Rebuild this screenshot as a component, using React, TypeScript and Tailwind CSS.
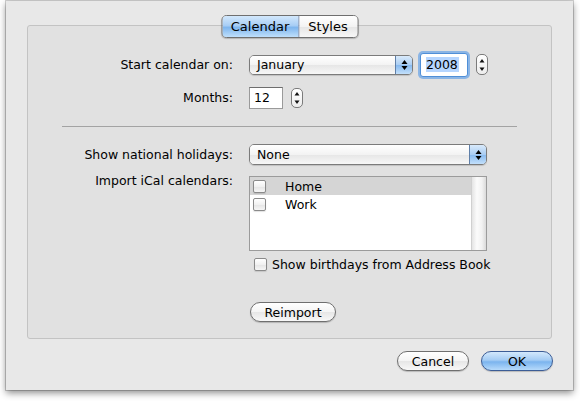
import React from "react";

const font = "font-['DejaVu_Sans',sans-serif]";

function Arrows({ color = "#000" }: { color?: string }) {
  return (
    <svg width="7" height="12" viewBox="0 0 7 12">
      <path d="M3.5 1 L6.5 5 L0.5 5 Z" fill={color} />
      <path d="M3.5 11 L6.5 7 L0.5 7 Z" fill={color} />
    </svg>
  );
}

function PopUp({ label, width, height }: { label: string; width: number; height: number }) {
  return (
    <div
      className="flex items-stretch rounded-[5px] border border-[#7b7b7b] overflow-hidden shadow-[0_1px_1px_rgba(0,0,0,0.15)]"
      style={{ width, height }}
    >
      <div className="flex-1 flex items-center pl-[7px] bg-[linear-gradient(#ffffff,#f3f3f3_50%,#e6e6e6_51%,#f7f7f7)] text-black">
        {label}
      </div>
      <div className="w-[17px] flex items-center justify-center border-l border-[#5f7fa8] bg-[linear-gradient(#d9eafb,#a9cdf3_50%,#86b9ef_51%,#c3e0fb)]">
        <Arrows />
      </div>
    </div>
  );
}

function Stepper({ h }: { h: number }) {
  return (
    <div
      className="w-[12px] flex flex-col items-center justify-center rounded-[5px] border border-[#7b7b7b] bg-[linear-gradient(#ffffff,#ededed)]"
      style={{ height: h }}
    >
      <svg width="6" height="14" viewBox="0 0 6 14">
        <path d="M3 1 L5.5 4.5 L0.5 4.5 Z" fill="#111" />
        <path d="M3 13 L5.5 9.5 L0.5 9.5 Z" fill="#111" />
      </svg>
    </div>
  );
}

function Check() {
  return (
    <div className="w-[13px] h-[13px] shrink-0 rounded-[2px] border border-[#8a8a8a] bg-[linear-gradient(#ffffff,#f1f1f1_50%,#e4e4e4_51%,#f6f6f6)] shadow-[0_1px_1px_rgba(0,0,0,0.12)]" />
  );
}

function Push({ label, w, blue = false }: { label: string; w: number; blue?: boolean }) {
  return (
    <button
      className={
        "h-[20px] rounded-full flex items-center justify-center text-black shadow-[0_1px_1px_rgba(0,0,0,0.2)] " +
        (blue
          ? "border border-[#3c5d96] bg-[linear-gradient(#d3e8fc,#a4ccf4_45%,#7bb4ee_55%,#b6dafb)]"
          : "border border-[#6f6f6f] bg-[linear-gradient(#ffffff,#f4f4f4_50%,#e6e6e6_51%,#f8f8f8)]")
      }
      style={{ width: w }}
    >
      {label}
    </button>
  );
}

export default function App() {
  return (
    <div className={`w-[580px] h-[401px] bg-white ${font} text-[12.5px] text-black leading-[15px]`}>
      <div className="ml-[6px] mt-[1px] w-[567px] h-[389px] bg-[#e8e8e8] shadow-[0_0_0_1px_rgba(0,0,0,0.18),0_3px_7px_rgba(0,0,0,0.45)] flex flex-col">
        {/* group box */}
        <div className="relative ml-[21px] mt-[24px] w-[525px] h-[314px] rounded-[3px] border border-[#c3c3c3] bg-[#e1e1e1] pt-[27px]">
          {/* tabs */}
          <div className="absolute top-[-11px] left-1/2 -translate-x-1/2 flex h-[23px] rounded-[5px] border border-[#6f6f6f] overflow-hidden shadow-[0_1px_1px_rgba(0,0,0,0.2)] text-[13px]">
            <div className="w-[77px] flex items-center justify-center border-r border-[#6f82a5] bg-[linear-gradient(#d3e8fc,#a8cef5_45%,#7fb6ee_55%,#bfdffb)]">
              Calendar
            </div>
            <div className="w-[58px] flex items-center justify-center bg-[linear-gradient(#ffffff,#f3f3f3_50%,#e5e5e5_51%,#f7f7f7)]">
              Styles
            </div>
          </div>

          <div className="grid grid-cols-[205px_1fr] gap-x-[16px] items-center">
            {/* row 1 */}
            <div className="text-right h-[23px] flex items-center justify-end">Start calendar on:</div>
            <div className="flex items-center h-[23px]">
              <PopUp label="January" width={164} height={20} />
              <div className="ml-[7px] w-[48px] h-[24px] rounded-[3px] bg-white border border-[#4f8fd8] shadow-[0_0_0_2px_rgba(110,165,230,0.75)] flex items-center pl-[5px]">
                <span className="bg-[#b5d5ff] pr-[1px]">2008</span>
              </div>
              <div className="ml-[8px]">
                <Stepper h={21} />
              </div>
            </div>

            {/* row 2 */}
            <div className="mt-[10px] h-[23px] flex items-center justify-end">Months:</div>
            <div className="mt-[10px] h-[23px] flex items-center">
              <div className="w-[34px] h-[22px] bg-white border border-[#9a9a9a] border-t-[#6e6e6e] flex items-center pl-[4px]">
                12
              </div>
              <div className="ml-[8px]">
                <Stepper h={20} />
              </div>
            </div>
          </div>

          {/* separator */}
          <div className="mx-[34px] mt-[17px] h-px bg-[#a3a3a3]" />

          <div className="grid grid-cols-[205px_1fr] gap-x-[16px]">
            {/* row 3 */}
            <div className="mt-[17px] h-[21px] flex items-center justify-end">Show national holidays:</div>
            <div className="mt-[17px]">
              <PopUp label="None" width={238} height={21} />
            </div>

            {/* row 4 */}
            <div className="mt-[8px] text-right">Import iCal calendars:</div>
            <div className="mt-[11px] w-[238px] h-[75px] border border-[#9b9b9b] bg-white flex">
              <div className="flex-1 flex flex-col">
                <div className="h-[18px] bg-[#d5d5d5] flex items-center pl-[3px]">
                  <Check />
                  <span className="ml-[19px]">Home</span>
                </div>
                <div className="h-[18px] flex items-center pl-[3px]">
                  <Check />
                  <span className="ml-[19px]">Work</span>
                </div>
              </div>
              <div className="w-[15px] bg-[linear-gradient(90deg,#e4e4e4,#fbfbfb_35%,#f2f2f2_70%,#dadada)] border-l border-[#d0d0d0]" />
            </div>

            {/* birthdays */}
            <div />
            <div className="mt-[6px] flex items-center pl-[5px]">
              <Check />
              <span className="ml-[5px]">Show birthdays from Address Book</span>
            </div>

            {/* reimport */}
            <div />
            <div className="mt-[30px] pl-[1px]">
              <Push label="Reimport" w={86} />
            </div>
          </div>
        </div>

        {/* footer buttons */}
        <div className="flex justify-end gap-[12px] mt-[12px] pr-[20px]">
          <Push label="Cancel" w={72} />
          <Push label="OK" w={72} blue />
        </div>
      </div>
    </div>
  );
}
